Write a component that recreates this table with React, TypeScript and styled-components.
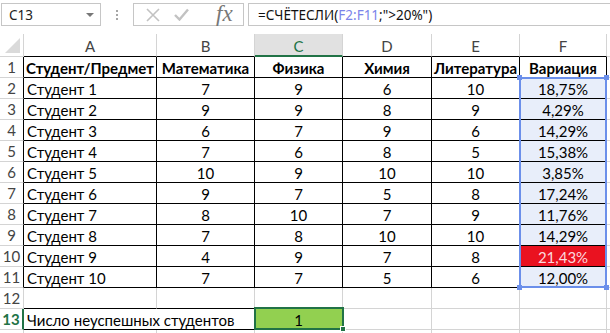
import React from "react";
import styled, { createGlobalStyle } from "styled-components";

// column widths in px: row header, A..F, then G runs off the edge
const HEAD_W = 24;
const COLS = [133, 98, 88, 89, 88, 87];
const HEADER_H = 23;
const ROW_H = 21;
const GRID = "#d4d4d4";
const INK = "#000";
const XL_GREEN = "#217346";
const REF_BLUE = "#6b8fea";

const GlobalStyle = createGlobalStyle`
  *, *::before, *::after { box-sizing: border-box; }
  html, body { margin: 0; padding: 0; background: #fff; overflow: hidden; }
  body { font-family: Lato, "Liberation Sans", sans-serif; }
`;

const Window = styled.div`
  width: 610px;
  height: 333px;
  overflow: hidden;
  background: #fff;
`;

/* ---------- formula bar ---------- */

const FormulaBar = styled.div`
  display: flex;
  align-items: stretch;
  height: 26px;
  padding: 3px 0 0 1px;
  margin-bottom: 8px;
`;

const NameBox = styled.div`
  width: 100px;
  border: 1px solid #c6c6c6;
  display: flex;
  align-items: center;
  justify-content: space-between;
  padding: 0 6px 0 7px;
  font-family: "Noto Sans", "Open Sans", sans-serif;
  font-size: 13.5px;
  color: #222;
`;

const DropArrow = styled.span`
  width: 0;
  height: 0;
  border-left: 4px solid transparent;
  border-right: 4px solid transparent;
  border-top: 4px solid #777;
`;

const Grip = styled.div`
  width: 32px;
  display: flex;
  flex-direction: column;
  align-items: center;
  justify-content: center;
  gap: 2px;
`;

const GripDot = styled.span`
  width: 2px;
  height: 2px;
  background: #a6a6a6;
`;

const FuncBox = styled.div`
  width: 111px;
  border: 1px solid #c6c6c6;
  display: flex;
  align-items: center;
  padding: 0 6px 0 12px;
  gap: 14px;
`;

const FxLabel = styled.span`
  font-family: "Liberation Serif", "DejaVu Serif", serif;
  font-style: italic;
  font-size: 23px;
  color: #777;
  margin-left: 13px;
  margin-top: -2px;
  line-height: 1;
`;

const FormulaInput = styled.div`
  flex: 1;
  margin-left: 4px;
  margin-right: -4px;
  border: 1px solid #c6c6c6;
  border-right: none;
  display: flex;
  align-items: center;
  padding-left: 9px;
  font-family: "Noto Sans", "Open Sans", sans-serif;
  font-size: 13.5px;
  color: #111;
  white-space: pre;
`;

const RefText = styled.span`
  color: #7b84ea;
`;

/* ---------- sheet ---------- */

const Sheet = styled.div`
  position: relative;
`;

const Row = styled.div<{ $h: number }>`
  display: grid;
  grid-template-columns: ${HEAD_W}px ${COLS.map((c) => `${c}px`).join(" ")} 200px;
  height: ${(p) => p.$h}px;
`;

const Corner = styled.div`
  position: relative;
  border-right: 1px solid ${GRID};
  border-bottom: 1px solid ${GRID};
  &::after {
    content: "";
    position: absolute;
    right: 3px;
    bottom: 3px;
    width: 0;
    height: 0;
    border-left: 15px solid transparent;
    border-bottom: 15px solid #dadada;
  }
`;

const ColHead = styled.div<{ $active?: boolean; $edge: string }>`
  display: flex;
  align-items: center;
  justify-content: center;
  font-size: 15px;
  padding-top: 2px;
  color: ${(p) => (p.$active ? XL_GREEN : "#444")};
  background: ${(p) => (p.$active ? "#e1e1e1" : "#fff")};
  border-right: 1px solid ${GRID};
  border-bottom: ${(p) => (p.$active ? `2px solid ${XL_GREEN}` : `1px solid ${p.$edge}`)};
`;

const RowHead = styled.div<{ $active?: boolean; $edge: string }>`
  display: flex;
  align-items: center;
  justify-content: center;
  font-size: 15px;
  color: ${(p) => (p.$active ? XL_GREEN : "#444")};
  font-weight: ${(p) => (p.$active ? 700 : 400)};
  border-right: ${(p) => (p.$active ? `2px solid ${XL_GREEN}` : `1px solid ${p.$edge}`)};
  border-bottom: 1px solid ${GRID};
`;

type Align = "left" | "center";

const Cell = styled.div<{
  $align?: Align;
  $bold?: boolean;
  $fill?: string;
  $ink?: string;
  $right?: string;
  $bottom?: string;
  $span?: number;
}>`
  display: flex;
  align-items: center;
  justify-content: ${(p) => (p.$align === "left" ? "flex-start" : "center")};
  padding: 1px 3px 0 3px;
  font-size: 15px;
  white-space: nowrap;
  overflow: visible;
  font-weight: ${(p) => (p.$bold ? 700 : 400)};
  color: ${(p) => p.$ink ?? INK};
  background: ${(p) => p.$fill ?? "transparent"};
  border-right: 1px solid ${(p) => p.$right ?? GRID};
  border-bottom: 1px solid ${(p) => p.$bottom ?? GRID};
  grid-column: span ${(p) => p.$span ?? 1};
`;

const RangeFrame = styled.div`
  position: absolute;
  border: 2px solid ${REF_BLUE};
  pointer-events: none;
`;

const Handle = styled.span<{ $color: string; $x: "l" | "r"; $y: "t" | "b" }>`
  position: absolute;
  width: 5px;
  height: 5px;
  background: ${(p) => p.$color};
  ${(p) => (p.$x === "l" ? "left: -4px;" : "right: -4px;")}
  ${(p) => (p.$y === "t" ? "top: -4px;" : "bottom: -4px;")}
`;

const ActiveFrame = styled.div`
  position: absolute;
  border: 2px solid ${XL_GREEN};
  pointer-events: none;
`;

const FillHandle = styled.span`
  position: absolute;
  right: -4px;
  bottom: -4px;
  width: 6px;
  height: 6px;
  background: ${XL_GREEN};
  border: 1px solid #fff;
`;

/* ---------- data ---------- */

const header = ["Студент/Предмет", "Математика", "Физика", "Химия", "Литература", "Вариация"];

const students: [string, number, number, number, number, string][] = [
  ["Студент 1", 7, 9, 6, 10, "18,75%"],
  ["Студент 2", 9, 9, 8, 9, "4,29%"],
  ["Студент 3", 6, 7, 9, 6, "14,29%"],
  ["Студент 4", 7, 6, 8, 5, "15,38%"],
  ["Студент 5", 10, 9, 10, 10, "3,85%"],
  ["Студент 6", 9, 7, 5, 8, "17,24%"],
  ["Студент 7", 8, 10, 7, 9, "11,76%"],
  ["Студент 8", 7, 8, 10, 10, "14,29%"],
  ["Студент 9", 4, 9, 7, 8, "21,43%"],
  ["Студент 10", 7, 7, 5, 6, "12,00%"],
];

const colLeft = (i: number) => HEAD_W + COLS.slice(0, i).reduce((a, b) => a + b, 0);
const rowTop = (r: number) => HEADER_H + (r - 1) * ROW_H;

const CrossIcon = () => (
  <svg width="14" height="14" viewBox="0 0 14 14">
    <path d="M1 1 L13 13 M13 1 L1 13" stroke="#c2c2c2" strokeWidth="1.6" fill="none" />
  </svg>
);

const CheckIcon = () => (
  <svg width="15" height="13" viewBox="0 0 15 13">
    <path d="M1 7 L5.5 11.5 L14 1.5" stroke="#c2c2c2" strokeWidth="2.4" fill="none" />
  </svg>
);

export default function App() {
  return (
    <Window>
      <GlobalStyle />
      <FormulaBar>
        <NameBox>
          C13
          <DropArrow />
        </NameBox>
        <Grip>
          <GripDot />
          <GripDot />
          <GripDot />
        </Grip>
        <FuncBox>
          <CrossIcon />
          <CheckIcon />
          <FxLabel>fx</FxLabel>
        </FuncBox>
        <FormulaInput>
          =СЧЁТЕСЛИ(<RefText>F2:F11</RefText>;"&gt;20%")
        </FormulaInput>
      </FormulaBar>

      <Sheet>
        <Row $h={HEADER_H}>
          <Corner />
          {["A", "B", "C", "D", "E", "F"].map((c) => (
            <ColHead key={c} $active={c === "C"} $edge={INK}>
              {c}
            </ColHead>
          ))}
          <ColHead $edge={GRID} />
        </Row>

        <Row $h={ROW_H}>
          <RowHead $edge={INK}>1</RowHead>
          {header.map((h) => (
            <Cell key={h} $bold $right={INK} $bottom={INK}>
              {h}
            </Cell>
          ))}
          <Cell />
        </Row>

        {students.map((s, i) => {
          const fail = s[5] === "21,43%";
          return (
            <Row key={s[0]} $h={ROW_H}>
              <RowHead $edge={INK}>{i + 2}</RowHead>
              <Cell $align="left" $right={INK} $bottom={INK}>
                {s[0]}
              </Cell>
              {[s[1], s[2], s[3], s[4]].map((v, k) => (
                <Cell key={k} $right={INK} $bottom={INK}>
                  {v}
                </Cell>
              ))}
              <Cell
                $right={INK}
                $bottom={INK}
                $fill={fail ? "#ea1220" : "#e8eefa"}
                $ink={fail ? "#fbd8de" : INK}
              >
                {s[5]}
              </Cell>
              <Cell />
            </Row>
          );
        })}

        <Row $h={ROW_H}>
          <RowHead $edge={GRID}>12</RowHead>
          <Cell $bottom={INK} />
          <Cell $bottom={INK} />
          <Cell />
          <Cell />
          <Cell />
          <Cell />
          <Cell />
        </Row>

        <Row $h={ROW_H}>
          <RowHead $active $edge={GRID}>
            13
          </RowHead>
          <Cell $span={2} $align="left" $right={INK} $bottom={INK}>
            Число неуспешных студентов
          </Cell>
          <Cell $fill="#92d050">1</Cell>
          <Cell />
          <Cell />
          <Cell />
          <Cell />
        </Row>

        <Row $h={ROW_H}>
          <RowHead $edge={GRID} />
          <Cell />
          <Cell />
          <Cell />
          <Cell />
          <Cell />
          <Cell />
          <Cell />
        </Row>

        <RangeFrame
          style={{
            left: colLeft(5) - 1,
            top: rowTop(2) - 1,
            width: COLS[5] + 1,
            height: ROW_H * 10 + 1,
          }}
        >
          <Handle $color={REF_BLUE} $x="l" $y="t" />
          <Handle $color={REF_BLUE} $x="r" $y="t" />
          <Handle $color={REF_BLUE} $x="l" $y="b" />
          <Handle $color={REF_BLUE} $x="r" $y="b" />
        </RangeFrame>

        <ActiveFrame
          style={{
            left: colLeft(2) - 1,
            top: rowTop(13) - 2,
            width: COLS[2] + 2,
            height: ROW_H + 2,
          }}
        >
          <FillHandle />
        </ActiveFrame>
      </Sheet>
    </Window>
  );
}
